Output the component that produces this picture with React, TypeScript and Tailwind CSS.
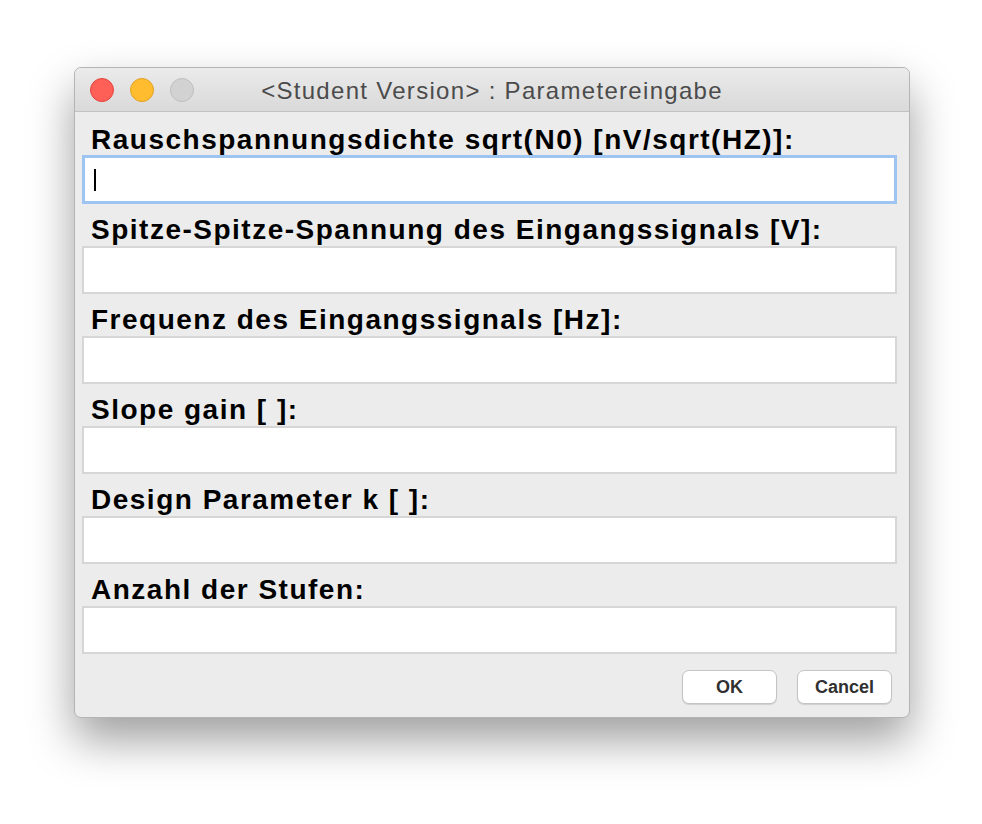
import React from "react";

const fields = [
    "Rauschspannungsdichte sqrt(N0) [nV/sqrt(HZ)]:",
    "Spitze-Spitze-Spannung des Eingangssignals [V]:",
    "Frequenz des Eingangssignals [Hz]:",
    "Slope gain [ ]:",
    "Design Parameter k [ ]:",
    "Anzahl der Stufen:",
];

export default function App() {
    return (
        <div className="min-h-[824px] w-[982px] bg-white pt-[67px] pl-[74px] font-['Liberation_Sans',Arial,sans-serif]">
            <div className="w-[836px] h-[651px] flex flex-col rounded-[7px] border border-[#b4b4b4] bg-[#ececec] overflow-hidden shadow-[0_22px_45px_rgba(0,0,0,0.38)]">
                {/* title bar */}
                <div className="relative h-[44px] shrink-0 flex items-center border-b border-[#c2c2c2] bg-linear-to-b from-[#ebebeb] to-[#d9d9d9]">
                    <div className="flex gap-[16px] pl-[15px]">
                        <span className="h-[24px] w-[24px] rounded-full bg-[#fe5f57] border border-[#e2463f]" />
                        <span className="h-[24px] w-[24px] rounded-full bg-[#febc2e] border border-[#e0a224]" />
                        <span className="h-[24px] w-[24px] rounded-full bg-[#d2d2d2] border border-[#bfbfbf]" />
                    </div>
                    <div className="absolute inset-0 flex items-center justify-center pt-[2px] text-[24px] tracking-[1.3px] text-[#4b4b4b] pointer-events-none">
                        &lt;Student Version&gt; : Parametereingabe
                    </div>
                </div>

                {/* form */}
                <div className="flex flex-1 flex-col pt-[10px] pl-[7px] pr-[12px]">
                    {fields.map((label, i) => (
                        <div key={label} className={i > 0 ? "mt-[8px]" : ""}>
                            <div className="pl-[9px] pt-[2px] text-[28px] leading-[32px] font-bold text-black tracking-[1.5px] whitespace-nowrap">
                                {label}
                            </div>
                            {i === 0 ? (
                                <div className="-mt-[1px] h-[49px] border-[3px] border-[#9ec5f1] bg-white flex items-center pl-[9px]">
                                    <span className="h-[22px] w-[2px] bg-black" />
                                </div>
                            ) : (
                                <div className="h-[48px] border-2 border-[#d6d6d6] bg-white" />
                            )}
                        </div>
                    ))}

                    <div className="mt-[16px] flex justify-end gap-[20px] pr-[5px]">
                        <button className="h-[34px] w-[95px] rounded-[7px] border border-[#c4c4c4] bg-white text-[18px] font-bold text-[#303030] shadow-[0_1px_1px_rgba(0,0,0,0.12)]">
                            OK
                        </button>
                        <button className="h-[34px] w-[95px] rounded-[7px] border border-[#c4c4c4] bg-white text-[18px] font-bold text-[#303030] shadow-[0_1px_1px_rgba(0,0,0,0.12)]">
                            Cancel
                        </button>
                    </div>
                </div>
            </div>
        </div>
    );
}
